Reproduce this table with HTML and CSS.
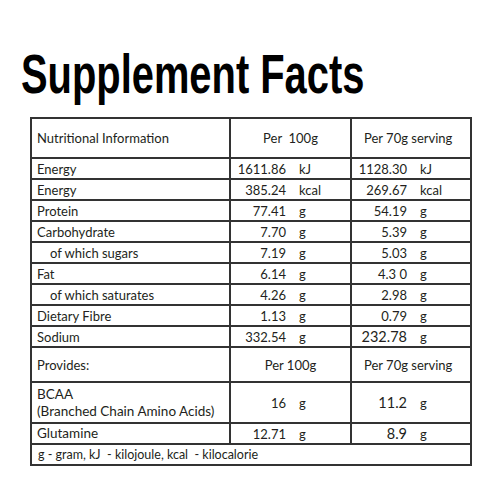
FILE: index.html
```html
<!DOCTYPE html>
<html lang="en">
<head>
<meta charset="utf-8">
<title>Supplement Facts</title>
<link rel="stylesheet" href="styles.css">
</head>
<body>
<div class="page">
  <h1 class="title">Supplement Facts</h1>
  <table class="facts">
    <colgroup>
      <col class="c-name">
      <col class="c-100">
      <col class="c-70">
    </colgroup>
    <tr class="head">
      <td>Nutritional Information</td>
      <td class="center">Per&nbsp; 100g</td>
      <td class="left-h">Per 70g serving</td>
    </tr>
    <tr>
      <td>Energy</td>
      <td><span class="num">1611.86</span><span class="unit">kJ</span></td>
      <td><span class="num">1128.30</span><span class="unit">kJ</span></td>
    </tr>
    <tr>
      <td>Energy</td>
      <td><span class="num">385.24</span><span class="unit">kcal</span></td>
      <td><span class="num">269.67</span><span class="unit">kcal</span></td>
    </tr>
    <tr>
      <td>Protein</td>
      <td><span class="num">77.41</span><span class="unit">g</span></td>
      <td><span class="num">54.19</span><span class="unit">g</span></td>
    </tr>
    <tr>
      <td>Carbohydrate</td>
      <td><span class="num">7.70</span><span class="unit">g</span></td>
      <td><span class="num">5.39</span><span class="unit">g</span></td>
    </tr>
    <tr>
      <td class="sub">of which sugars</td>
      <td><span class="num">7.19</span><span class="unit">g</span></td>
      <td><span class="num">5.03</span><span class="unit">g</span></td>
    </tr>
    <tr>
      <td>Fat</td>
      <td><span class="num">6.14</span><span class="unit">g</span></td>
      <td><span class="num">4.3 0</span><span class="unit">g</span></td>
    </tr>
    <tr>
      <td class="sub">of which saturates</td>
      <td><span class="num">4.26</span><span class="unit">g</span></td>
      <td><span class="num">2.98</span><span class="unit">g</span></td>
    </tr>
    <tr>
      <td>Dietary Fibre</td>
      <td><span class="num">1.13</span><span class="unit">g</span></td>
      <td><span class="num">0.79</span><span class="unit">g</span></td>
    </tr>
    <tr>
      <td>Sodium</td>
      <td><span class="num">332.54</span><span class="unit">g</span></td>
      <td><span class="num big">232.78</span><span class="unit">g</span></td>
    </tr>
    <tr class="provides">
      <td>Provides:</td>
      <td class="center">Per 100g</td>
      <td class="left-h">Per 70g serving</td>
    </tr>
    <tr class="bcaa">
      <td class="lg">BCAA<br>(Branched Chain Amino Acids)</td>
      <td><span class="num">16</span><span class="unit">g</span></td>
      <td><span class="num big">11.2</span><span class="unit">g</span></td>
    </tr>
    <tr>
      <td class="lg">Glutamine</td>
      <td><span class="num">12.71</span><span class="unit">g</span></td>
      <td><span class="num big">8.9</span><span class="unit">g</span></td>
    </tr>
    <tr class="foot">
      <td colspan="3">g - gram, kJ &nbsp;- kilojoule, kcal &nbsp;- kilocalorie</td>
    </tr>
  </table>
</div>
</body>
</html>
```

FILE: styles.css
```css
html, body {
  margin: 0;
  padding: 0;
  background: #ffffff;
}

.page {
  width: 500px;
  height: 500px;
  padding-top: 46px;
  box-sizing: border-box;
}

.title {
  display: inline-block;
  margin: 0 0 0 21px;
  font-family: "Liberation Sans", Arial, sans-serif;
  font-weight: 700;
  font-size: 56px;
  line-height: 56px;
  height: 56px;
  color: #000;
  transform: scaleX(0.712);
  transform-origin: 0 0;
  white-space: nowrap;
}

.facts {
  margin: 15px 0 0 30px;
  width: 440px;
  border-collapse: collapse;
  table-layout: fixed;
  font-family: Lato, "Open Sans", sans-serif;
  font-size: 13px;
  color: #231f20;
}

.c-name { width: 199px; }
.c-100 { width: 121px; }
.c-70 { width: 120px; }

.facts td {
  border: 2px solid #333;
  padding: 0 0 0 5px;
  line-height: 16px;
  vertical-align: middle;
  white-space: nowrap;
}

.facts tr { height: 21px; }
.facts tr.head { height: 40px; }
.facts tr.provides { height: 35px; }
.facts tr.bcaa { height: 41px; }

.facts td.sub { padding-left: 18px; }
.facts td.center { text-align: center; padding-left: 0; }
.facts td.left-h { padding-left: 12px; }
.facts td.lg { font-size: 13.5px; line-height: 17px; }

.num {
  display: inline-block;
  width: 50px;
  text-align: right;
}

.num.big { font-size: 14.5px; }

.unit {
  display: inline-block;
  margin-left: 13px;
}

.foot td { font-size: 12.5px; padding-left: 6px; }
```
